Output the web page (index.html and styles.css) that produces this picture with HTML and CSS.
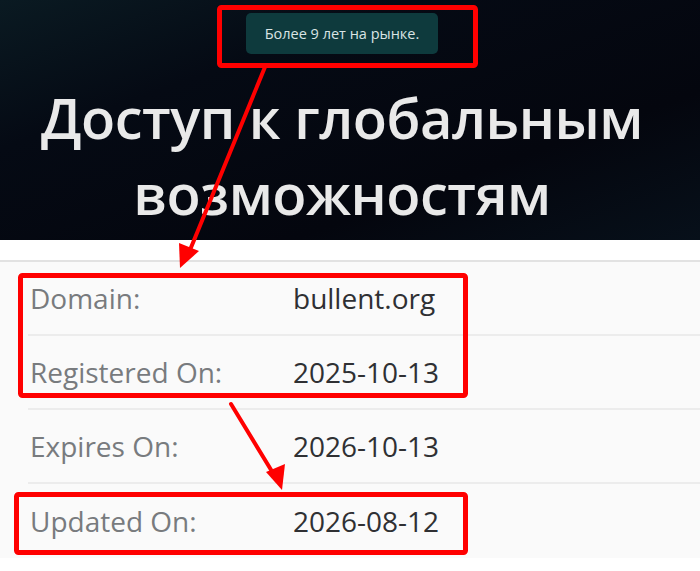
FILE: index.html
```html
<!DOCTYPE html>
<html lang="ru">
<head>
<meta charset="utf-8">
<link rel="stylesheet" href="styles.css">
</head>
<body>
<div class="page">
  <header class="hero">
    <div class="badge">Более 9 лет на рынке.</div>
    <h1 class="title">Доступ к глобальным<br>возможностям</h1>
  </header>
  <section class="info">
    <div class="rows">
      <div class="row"><span class="label">Domain:</span><span class="value">bullent.org</span></div>
      <div class="row"><span class="label">Registered On:</span><span class="value">2025-10-13</span></div>
      <div class="row"><span class="label">Expires On:</span><span class="value">2026-10-13</span></div>
      <div class="row"><span class="label">Updated On:</span><span class="value">2026-08-12</span></div>
    </div>
  </section>
  <svg class="marks" width="700" height="571" viewBox="0 0 700 571">
    <g fill="none" stroke="#ff0000" stroke-width="5" stroke-linejoin="round">
      <rect x="219.5" y="7.5" width="256" height="58" rx="2"/>
      <rect x="20.5" y="275.5" width="445" height="120" rx="2"/>
      <rect x="16.5" y="494.5" width="449" height="58" rx="2"/>
    </g>
    <g stroke="#ff0000" stroke-width="4" stroke-linecap="round">
      <line x1="265" y1="67" x2="190" y2="250"/>
      <line x1="231" y1="404" x2="276" y2="478"/>
    </g>
    <g fill="#ff0000">
      <polygon points="180,268 179,243 199,251"/>
      <polygon points="282,490 266,472 285,464"/>
    </g>
  </svg>
</div>
</body>
</html>
```
FILE: styles.css
```css
* { box-sizing: border-box; }
html, body { margin: 0; padding: 0; }
body { background: #ffffff; font-family: "Open Sans", "Noto Sans", sans-serif; }
.page { position: relative; width: 700px; height: 571px; overflow: hidden; }
.hero {
  height: 240px;
  background: linear-gradient(160deg, #0a1a22 0%, #050a14 30%, #04060e 70%, #07101a 100%);
  display: flex;
  flex-direction: column;
  align-items: center;
  padding: 13px 16px 0 0;
}
.badge {
  background: #0e3a3d;
  color: #d9e4e4;
  font-size: 14.5px;
  line-height: 41px;
  height: 41px;
  padding: 0 19px;
  border-radius: 5px;
}
.title {
  margin: 25px 0 0;
  color: #e9e9e9;
  font-weight: 600;
  font-size: 56px;
  line-height: 76px;
  letter-spacing: -0.5px;
  text-align: center;
}
.info { padding-top: 20px; background: #fff; }
.rows { border-top: 2px solid #e2e2e2; background: #fafafa; }
.row {
  display: grid;
  grid-template-columns: 263px 1fr;
  align-items: center;
  height: 74px;
  margin-left: 28px;
  padding-left: 2px;
  border-bottom: 2px solid #ececec;
}
.row:last-child { border-bottom: none; }
.label { color: #787b7e; font-size: 28px; }
.value { color: #2f3033; font-size: 28px; }
.marks { position: absolute; left: 0; top: 0; }
```
